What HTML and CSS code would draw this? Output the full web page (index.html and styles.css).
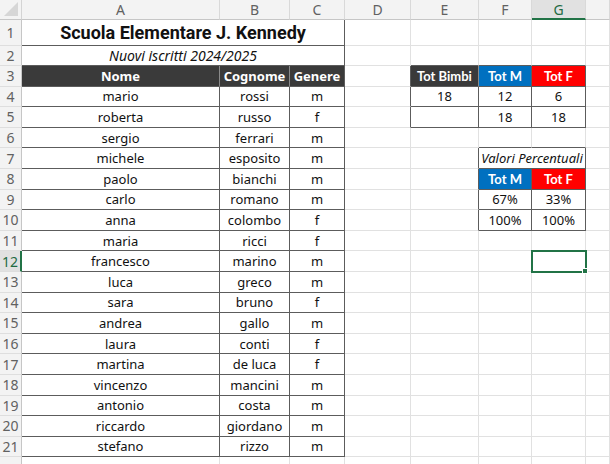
FILE: index.html
```html
<!DOCTYPE html>
<html lang="it">
<head>
<meta charset="utf-8">
<title>Scuola Elementare J. Kennedy</title>
<link rel="stylesheet" href="styles.css">
</head>
<body>
<div class="sheet">
  <!-- column headers -->
  <div class="corner"><span class="tri"></span></div>
  <div class="ch">A</div><div class="ch">B</div><div class="ch">C</div><div class="ch">D</div>
  <div class="ch">E</div><div class="ch">F</div><div class="ch sel">G</div><div class="ch"></div>

  <!-- row 1 -->
  <div class="rh">1</div>
  <div class="c span3 tb title">Scuola Elementare J. Kennedy</div>
  <div class="c"></div><div class="c"></div><div class="c"></div><div class="c"></div><div class="c"></div>

  <!-- row 2 -->
  <div class="rh">2</div>
  <div class="c span3 tb sub big">Nuovi iscritti 2024/2025</div>
  <div class="c"></div><div class="c dk-b"></div><div class="c dk-b"></div><div class="c dk-b"></div><div class="c"></div>

  <!-- row 3 -->
  <div class="rh">3</div>
  <div class="c hd dark">Nome</div><div class="c hd dark">Cognome</div><div class="c hd dark tb-r">Genere</div>
  <div class="c dk-r"></div>
  <div class="c hd dark tb tot">Tot Bimbi</div><div class="c hd blue tb tot">Tot M</div><div class="c hd red tb tot">Tot F</div>
  <div class="c"></div>

  <!-- row 4 -->
  <div class="rh">4</div>
  <div class="c tb">mario</div><div class="c tb">rossi</div><div class="c tb">m</div>
  <div class="c dk-r"></div>
  <div class="c tb">18</div><div class="c tb">12</div><div class="c tb">6</div><div class="c"></div>

  <!-- row 5 -->
  <div class="rh">5</div>
  <div class="c tb">roberta</div><div class="c tb">russo</div><div class="c tb">f</div>
  <div class="c dk-r"></div>
  <div class="c tb"></div><div class="c tb">18</div><div class="c tb">18</div><div class="c"></div>

  <!-- row 6 -->
  <div class="rh">6</div>
  <div class="c tb">sergio</div><div class="c tb">ferrari</div><div class="c tb">m</div>
  <div class="c"></div><div class="c"></div><div class="c dk-b"></div><div class="c dk-b"></div><div class="c"></div>

  <!-- row 7 -->
  <div class="rh">7</div>
  <div class="c tb">michele</div><div class="c tb">esposito</div><div class="c tb">m</div>
  <div class="c"></div><div class="c dk-r"></div><div class="c span2 tb sub">Valori Percentuali</div><div class="c"></div>

  <!-- row 8 -->
  <div class="rh">8</div>
  <div class="c tb">paolo</div><div class="c tb">bianchi</div><div class="c tb">m</div>
  <div class="c"></div><div class="c dk-r"></div><div class="c hd blue tb tot">Tot M</div><div class="c hd red tb tot">Tot F</div><div class="c"></div>

  <!-- row 9 -->
  <div class="rh">9</div>
  <div class="c tb">carlo</div><div class="c tb">romano</div><div class="c tb">m</div>
  <div class="c"></div><div class="c dk-r"></div><div class="c tb">67%</div><div class="c tb">33%</div><div class="c"></div>

  <!-- row 10 -->
  <div class="rh">10</div>
  <div class="c tb">anna</div><div class="c tb">colombo</div><div class="c tb">f</div>
  <div class="c"></div><div class="c dk-r"></div><div class="c tb">100%</div><div class="c tb">100%</div><div class="c"></div>

  <!-- row 11 -->
  <div class="rh">11</div>
  <div class="c tb">maria</div><div class="c tb">ricci</div><div class="c tb">f</div>
  <div class="c"></div><div class="c"></div><div class="c"></div><div class="c"></div><div class="c"></div>

  <!-- row 12 -->
  <div class="rh sel">12</div>
  <div class="c tb">francesco</div><div class="c tb">marino</div><div class="c tb">m</div>
  <div class="c"></div><div class="c"></div><div class="c"></div><div class="c active"></div><div class="c"></div>

  <!-- row 13 -->
  <div class="rh">13</div>
  <div class="c tb">luca</div><div class="c tb">greco</div><div class="c tb">m</div>
  <div class="c"></div><div class="c"></div><div class="c"></div><div class="c"></div><div class="c"></div>

  <!-- row 14 -->
  <div class="rh">14</div>
  <div class="c tb">sara</div><div class="c tb">bruno</div><div class="c tb">f</div>
  <div class="c"></div><div class="c"></div><div class="c"></div><div class="c"></div><div class="c"></div>

  <!-- row 15 -->
  <div class="rh">15</div>
  <div class="c tb">andrea</div><div class="c tb">gallo</div><div class="c tb">m</div>
  <div class="c"></div><div class="c"></div><div class="c"></div><div class="c"></div><div class="c"></div>

  <!-- row 16 -->
  <div class="rh">16</div>
  <div class="c tb">laura</div><div class="c tb">conti</div><div class="c tb">f</div>
  <div class="c"></div><div class="c"></div><div class="c"></div><div class="c"></div><div class="c"></div>

  <!-- row 17 -->
  <div class="rh">17</div>
  <div class="c tb">martina</div><div class="c tb">de luca</div><div class="c tb">f</div>
  <div class="c"></div><div class="c"></div><div class="c"></div><div class="c"></div><div class="c"></div>

  <!-- row 18 -->
  <div class="rh">18</div>
  <div class="c tb">vincenzo</div><div class="c tb">mancini</div><div class="c tb">m</div>
  <div class="c"></div><div class="c"></div><div class="c"></div><div class="c"></div><div class="c"></div>

  <!-- row 19 -->
  <div class="rh">19</div>
  <div class="c tb">antonio</div><div class="c tb">costa</div><div class="c tb">m</div>
  <div class="c"></div><div class="c"></div><div class="c"></div><div class="c"></div><div class="c"></div>

  <!-- row 20 -->
  <div class="rh">20</div>
  <div class="c tb">riccardo</div><div class="c tb">giordano</div><div class="c tb">m</div>
  <div class="c"></div><div class="c"></div><div class="c"></div><div class="c"></div><div class="c"></div>

  <!-- row 21 -->
  <div class="rh">21</div>
  <div class="c tb">stefano</div><div class="c tb">rizzo</div><div class="c tb">m</div>
  <div class="c"></div><div class="c"></div><div class="c"></div><div class="c"></div><div class="c"></div>

  <!-- row 22 (only a sliver is visible) -->
  <div class="rh"></div>
  <div class="c"></div><div class="c"></div><div class="c"></div>
  <div class="c"></div><div class="c"></div><div class="c"></div><div class="c"></div><div class="c"></div>
</div>
</body>
</html>
```
FILE: styles.css
```css
* { box-sizing: border-box; }
html, body { margin: 0; padding: 0; background: #ffffff; overflow: hidden; }
body { width: 610px; height: 464px; }

.sheet {
  display: grid;
  grid-template-columns: 22px 198px 70px 55px 66px 68px 53px 54px 1fr;
  grid-template-rows: 20px 26px 20px repeat(20, 20.6px);
  font-family: "Noto Sans", "Open Sans", sans-serif;
  font-size: 13px;
  color: #111;
}

.corner {
  position: relative;
  background: #f3f3f3;
  border-right: 1px solid #d4d4d4;
  border-bottom: 1px solid #c6c6c6;
}
.corner .tri {
  position: absolute;
  right: 3px; bottom: 3px;
  width: 0; height: 0;
  border-left: 14px solid transparent;
  border-bottom: 14px solid #d6d6d6;
}

.ch {
  background: #f3f3f3;
  color: #616161;
  font-size: 14px;
  display: flex; align-items: center; justify-content: center;
  border-right: 1px solid #d9d9d9;
  border-bottom: 1px solid #c6c6c6;
}
.ch.sel {
  background: #e1e1e1;
  color: #1f6b43;
  border-bottom: 2px solid #217346;
}

.rh {
  background: #f3f3f3;
  color: #616161;
  font-size: 14px;
  display: flex; align-items: center; justify-content: center;
  border-right: 1px solid #c6c6c6;
  border-bottom: 1px solid #dedede;
}
.rh.sel {
  background: #e1e1e1;
  color: #1f6b43;
  border-right: 2px solid #217346;
}

.c {
  display: flex; align-items: center; justify-content: center;
  border-right: 1px solid #e1e1e1;
  border-bottom: 1px solid #e1e1e1;
  white-space: nowrap;
  overflow: visible;
}

.tb { border-right: 1px solid #5c5c5c; border-bottom: 1px solid #5c5c5c; }
.dk-r { border-right: 1px solid #5c5c5c; }
.dk-b { border-bottom: 1px solid #5c5c5c; }

.span3 { grid-column: span 3; }
.span2 { grid-column: span 2; }

.title { font-weight: 700; font-size: 18px; font-family: "Roboto", sans-serif; }
.sub { font-style: italic; font-size: 13px; }
.sub.big { font-size: 14px; }

.hd { color: #ffffff; font-weight: 700; }
.dark { background: #3a3a3a; border-right-color: #8a8a8a; }
.dark.tb-r { border-right-color: #5c5c5c; }
.dark { border-bottom-color: #5c5c5c; }
.blue { background: #0070c0; }
.red { background: #ff0000; }
.tot { font-family: "Lato", sans-serif; font-size: 13px; }

.active {
  position: relative;
  outline: 2px solid #217346;
  outline-offset: -1px;
  z-index: 2;
}
.active::after {
  content: "";
  position: absolute;
  right: -3px; bottom: -3px;
  width: 4px; height: 4px;
  background: #217346;
  border: 1px solid #ffffff;
}
```
